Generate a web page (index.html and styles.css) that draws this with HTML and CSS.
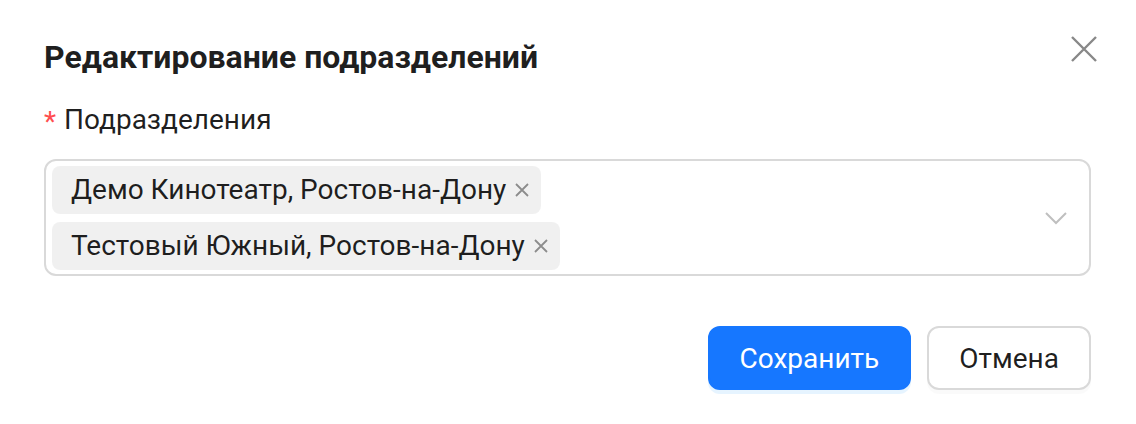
FILE: index.html
```html
<!DOCTYPE html>
<html lang="ru">
<head>
<meta charset="utf-8">
<link rel="stylesheet" href="styles.css">
</head>
<body>
<div class="modal">
  <div class="header">
    <div class="title">Редактирование подразделений</div>
    <svg class="close" width="26" height="26" viewBox="0 0 26 26"><path d="M1 1L25 25M25 1L1 25" stroke="#888" stroke-width="2.4" fill="none"/></svg>
  </div>
  <div class="label"><span class="req">*</span>Подразделения</div>
  <div class="select">
    <div class="tags">
      <span class="tag">Демо Кинотеатр, Ростов-на-Дону<svg class="tag-x" width="14" height="14" viewBox="0 0 14 14"><path d="M1 1L13 13M13 1L1 13" stroke="#8c8c8c" stroke-width="1.8" fill="none"/></svg></span>
      <span class="tag">Тестовый Южный, Ростов-на-Дону<svg class="tag-x" width="14" height="14" viewBox="0 0 14 14"><path d="M1 1L13 13M13 1L1 13" stroke="#8c8c8c" stroke-width="1.8" fill="none"/></svg></span>
    </div>
    <svg class="chev" width="22" height="13" viewBox="0 0 22 13"><path d="M1 1L11 11L21 1" stroke="#bfbfbf" stroke-width="2" fill="none"/></svg>
  </div>
  <div class="footer">
    <button class="btn primary">Сохранить</button>
    <button class="btn">Отмена</button>
  </div>
</div>
</body>
</html>
```

FILE: styles.css
```css
html, body {
  margin: 0;
  padding: 0;
  background: #fff;
}
body {
  font-family: Roboto, "Liberation Sans", sans-serif;
  color: rgba(0, 0, 0, 0.88);
}
.modal {
  width: 1136px;
  height: 424px;
  box-sizing: border-box;
  padding: 35px 45px 0 44px;
}
.header {
  display: flex;
  justify-content: space-between;
  align-items: flex-start;
}
.title {
  font-size: 32px;
  font-weight: 700;
  line-height: 44px;
}
.close {
  margin-top: 1px;
  margin-right: -6px;
}
.label {
  margin-top: 19px;
  font-size: 28px;
  line-height: 44px;
  display: flex;
  align-items: center;
}
.req {
  color: #ff4d4f;
  font-size: 28px;
  margin-right: 8px;
  line-height: 1;
  position: relative;
  top: 2px;
}
.select {
  margin-top: 17px;
  border: 2px solid #d9d9d9;
  border-radius: 12px;
  padding: 5px 22px 4px 6px;
  display: flex;
  align-items: center;
  justify-content: space-between;
}
.tags {
  display: flex;
  flex-direction: column;
  align-items: flex-start;
  gap: 8px;
}
.tag {
  display: inline-flex;
  align-items: center;
  height: 48px;
  box-sizing: border-box;
  padding: 0 12px 0 19px;
  background: rgba(0, 0, 0, 0.06);
  border-radius: 8px;
  font-size: 28px;
  line-height: 48px;
}
.tag-x {
  margin-left: 9px;
}
.chev {
  margin-top: 1px;
}
.footer {
  margin-top: 50px;
  display: flex;
  justify-content: flex-end;
  gap: 16px;
}
.btn {
  height: 64px;
  box-sizing: border-box;
  border: 2px solid #d9d9d9;
  background: #fff;
  border-radius: 12px;
  font-family: Roboto, "Liberation Sans", sans-serif;
  font-size: 28px;
  color: rgba(0, 0, 0, 0.88);
  padding: 0 30px;
  box-shadow: 0 4px 0 rgba(0, 0, 0, 0.02);
}
.btn.primary {
  background: #1677ff;
  border-color: #1677ff;
  color: #fff;
  box-shadow: 0 4px 0 rgba(5, 145, 255, 0.1);
}
```
